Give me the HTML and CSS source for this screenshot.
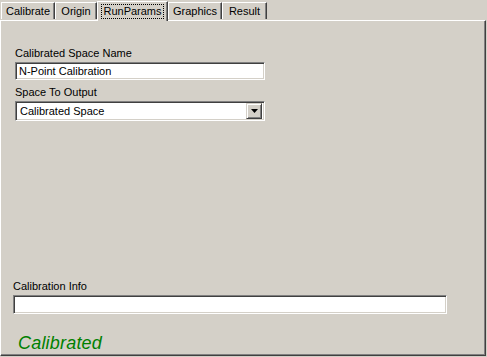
FILE: index.html
```html
<!DOCTYPE html>
<html lang="en">
<head>
    <meta charset="UTF-8">
    <title>RunParams</title>
    <link rel="stylesheet" href="styles.css">
</head>
<body>
<div id="dialog">
    <div id="tab-bar">
        <div class="tab tab-calibrate">Calibrate</div>
        <div class="tab tab-origin">Origin</div>
        <div class="tab tab-runparams selected"><span class="focus">RunParams</span></div>
        <div class="tab tab-graphics">Graphics</div>
        <div class="tab tab-result">Result</div>
    </div>
    <div id="panel">
        <div class="field-group top-group">
            <label class="field-label">Calibrated Space Name</label>
            <div class="edit-box name-box">N-Point Calibration</div>
            <label class="field-label">Space To Output</label>
            <div class="edit-box combo-box">
                <span class="combo-text">Calibrated Space</span>
                <span class="combo-button">
                    <svg width="7" height="4" viewBox="0 0 7 4"><path d="M0 0h7L3.5 4z" fill="#000"/></svg>
                </span>
            </div>
        </div>
        <div class="spacer"></div>
        <div class="field-group bottom-group">
            <label class="field-label">Calibration Info</label>
            <div class="edit-box info-box"></div>
        </div>
        <div id="status">Calibrated</div>
    </div>
</div>
</body>
</html>
```

FILE: styles.css
```css
body {
    margin: 0;
    padding: 0;
    background-color: #d4d0c8;
    font-family: "Liberation Sans", Arial, sans-serif;
    font-size: 11px;
    color: #000;
}
#dialog {
    width: 487px;
    height: 357px;
    display: flex;
    flex-direction: column;
    overflow: hidden;
}
#tab-bar {
    display: flex;
    align-items: flex-end;
    height: 20px;
    padding-left: 1px;
    position: relative;
    z-index: 1;
}
.tab {
    height: 17px;
    box-sizing: border-box;
    border-top: 1px solid #fff;
    border-left: 1px solid #fff;
    border-right: 1px solid #404040;
    box-shadow: inset -1px 0 #808080;
    line-height: 17px;
    text-align: center;
    margin-bottom: 1px;
}
.tab-calibrate { width: 54px; }
.tab-origin { width: 42px; }
.tab-graphics { width: 54px; }
.tab-result { width: 45px; }
.tab.selected {
    width: 71px;
    height: 20px;
    margin-bottom: -1px;
    background-color: #d4d0c8;
    padding: 2px 3px 0 3px;
    line-height: 14px;
}
.focus {
    display: block;
    border: 1px dotted #000;
    height: 15px;
    box-sizing: border-box;
    line-height: 13px;
}
#panel {
    flex: 1;
    display: flex;
    flex-direction: column;
    border-top: 1px solid #fff;
    border-left: 1px solid #fff;
    border-right: 1px solid #404040;
    border-bottom: 1px solid #404040;
    box-shadow: inset -1px -1px #808080;
    margin-right: 1px;
    margin-bottom: 1px;
}
.field-group {
    display: flex;
    flex-direction: column;
}
.top-group {
    padding: 26px 0 0 14px;
    width: 250px;
}
.bottom-group {
    padding-left: 12px;
    width: 434px;
}
.field-label {
    height: 13px;
    line-height: 13px;
    margin-bottom: 2px;
}
.edit-box {
    box-sizing: border-box;
    background-color: #fff;
    border-top: 1px solid #808080;
    border-left: 1px solid #808080;
    border-right: 1px solid #fff;
    border-bottom: 1px solid #fff;
    box-shadow: inset 1px 1px #404040, inset -1px -1px #d4d0c8;
    padding: 0 3px;
    line-height: 17px;
}
.name-box {
    height: 18px;
    margin-bottom: 6px;
}
.combo-box {
    height: 20px;
    display: flex;
    align-items: center;
    padding: 2px;
}
.combo-text {
    flex: 1;
    padding-left: 2px;
    line-height: 16px;
}
.combo-button {
    width: 16px;
    height: 16px;
    box-sizing: border-box;
    background-color: #d4d0c8;
    border-top: 1px solid #d4d0c8;
    border-left: 1px solid #d4d0c8;
    border-right: 1px solid #404040;
    border-bottom: 1px solid #404040;
    box-shadow: inset 1px 1px #fff, inset -1px -1px #808080;
    display: flex;
    align-items: center;
    justify-content: center;
}
.spacer {
    flex: 1;
}
.info-box {
    height: 19px;
}
#status {
    padding: 21px 0 3px 17px;
    font-size: 18px;
    font-style: italic;
    letter-spacing: 0.2px;
    color: #008000;
    line-height: 17px;
}
```
